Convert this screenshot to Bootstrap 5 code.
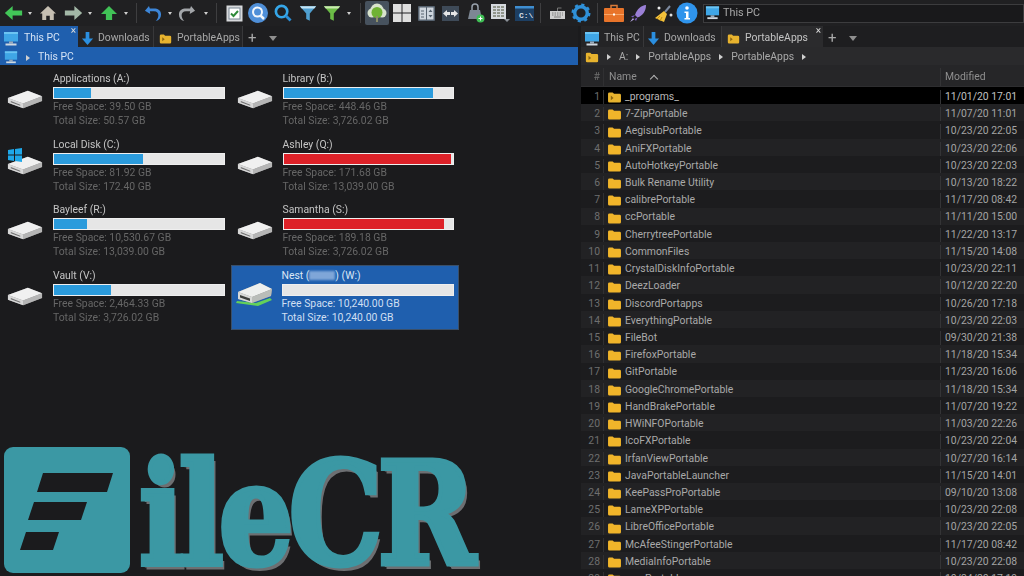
<!DOCTYPE html>
<html lang="en"><head><meta charset="utf-8"><title>XYplorer</title>
<link href="https://cdn.jsdelivr.net/npm/bootstrap@5.3.0/dist/css/bootstrap.min.css" rel="stylesheet">
<style>
html,body{height:100%;margin:0;overflow:hidden}
body{background:#1b1b1d;font:10.4px/1 Roboto,sans-serif;color:#bdbdbd;width:1024px;height:576px;position:relative}
.softlayer{filter:blur(.35px);height:576px}
svg{display:block;flex:none}
.topbar{height:26px;background:#202022;padding-left:1px}
.slot{width:24px;height:24px;display:flex;align-items:center;justify-content:center;flex:none}
.slot.on{background:#47525e;border-radius:2px}
.shift{margin-left:1px}
.shift2{margin-left:2px}
.pip{width:10px;display:flex;justify-content:center;flex:none}
.pip.tight,.vsep.tight{width:9px}
.pip i{display:block;width:0;height:0;border:2px solid transparent;border-top:3px solid #cfcfcf;border-bottom:0}
.vsep{width:10px;display:flex;justify-content:center;flex:none}
.vsep i{display:block;width:1px;height:20px;background:#3e3e40}
.addr{margin-left:4px;flex:1;height:19px;border:1px solid #3c3c3e;background:#19191b;padding-left:1px;gap:3px;font-size:10.8px;color:#a8a8a8}
.panes{height:550px}
.pane-l{width:578px;flex:none;background:#1b1b1d}
.pane-gap{width:3px;flex:none;background:#1b1b1d}
.pane-r{flex:1;background:#1f1f21;min-width:0}
.tabrow{height:21px;background:#1e1e20;color:#a9a9a9}
.tabx{height:21px;border-right:1px solid #38383a;padding:4px 0 0 3px;gap:4px;flex:none;position:relative;background:#242426;white-space:nowrap}
.tabx.folder{padding-left:5px;gap:5px}
.tabx.act-blue{background:#1f5fae;color:#d5e3f5;border:0;gap:5px}
.tabx.act-dark{background:#2b2b2d;color:#c4c4c4;border:0}
.tabx b{font-weight:400;position:absolute;right:2px;top:0;font-size:10px;color:#dcdcdc;line-height:9px}
.tw-63{width:63px}.tw-76{width:76px}.tw-78{width:78px}.tw-89{width:89px}.tw-101{width:101px}
.tabadd{font-size:15px;color:#a8a8a8;margin:3px 0 0 5px;width:13px;font-weight:400}
.tabmore{width:0;height:0;border:4px solid transparent;border-top:5px solid #8f8f8f;border-bottom:0;margin:4px 0 0 8px}
.crumbs{height:18px;gap:0}
.crumbs.blue{background:#1f5fae;color:#d3e2f5;padding-top:3px}
.crumbs.dark{background:#2a2a2c;color:#a9a9a9;padding-top:2px}
.tri{width:0;height:0;border:3px solid transparent;border-left:4px solid #d0d0d0;border-right:0;flex:none}
.drives{display:grid;grid-template-columns:229.5px 229.5px;grid-auto-rows:65.67px;padding:3px 0 0 1px}
.drv{padding:0 6px 0 52px;position:relative;color:#666}
.drv.sel{background:#1f5fae;border:1px solid #3a4f69;color:#d0dff2;margin:0 1px 1px 0;padding-left:50px;padding-right:4px}
.drv svg.dk{position:absolute;left:6px;top:22px}
.drv svg.dk.big{left:3px;top:16px}
.drv svg.win{position:absolute;left:7px;top:14px}
.drv-name{color:#c4c4c4;height:19px;line-height:21px;white-space:nowrap}
.sel .drv-name{color:#dbe6f5;height:18px;line-height:19px}
.blurname{display:inline-block;width:26px;height:9px;background:#7fa6d8;filter:blur(1.2px);vertical-align:-1px}
.meter{height:12px;background:#e6e6e6;border:1px solid #efefef;display:flex;margin-bottom:1px}
.meter span{display:block;height:100%}
.fill-b{background:#2b9bdc}
.fill-r{background:#dd2128}
.drv-l{height:14px;line-height:14px;white-space:nowrap}
.brand{position:absolute;left:4px;top:447px;height:126px;pointer-events:none;gap:7px}
.brand-t{font:700 136px/126px "DejaVu Serif",serif;color:#3b98a4;letter-spacing:-6px;text-shadow:2px 2px 0 #6d6f72,4px 4px 0 #6d6f72;-webkit-text-stroke:5px #3b98a4;transform-origin:0 85%;transform:scale(.87,1.05);white-space:nowrap;margin-top:6px;margin-left:2px}
.lhead{height:22px;background:#262628;color:#8f8f8f;border-bottom:1px solid #2e2e30;padding-top:3px}
.c-n{width:23px;flex:none;text-align:right;padding-right:3px;color:#6f6f6f;border-right:1px solid #303032;height:100%;display:flex;align-items:center;justify-content:flex-end}
.c-name{flex:1;display:flex;align-items:center;gap:3px;padding-left:3px;min-width:0;white-space:nowrap;color:#a9a9a9;height:100%}
.lhead .c-name{padding-left:5px}
.c-date{width:84px;flex:none;padding-left:4px;display:flex;align-items:center;border-left:1px solid #343436;height:100%;color:#a4a4a4;white-space:nowrap}
.lhead .c-name,.lhead .c-date{color:#8f8f8f}
.caret-up{width:6px;height:6px;border-left:1.5px solid #b5b5b5;border-top:1.5px solid #b5b5b5;transform:rotate(45deg);margin:3px 0 0 11px}
.rw{height:17.22px;background:#1c1c1e;padding-top:3px}
.rw:nth-child(even){background:#222224}
.rw.first{background:#000}
.rw.first .c-date{color:#c0c0c0}
.rw.first .c-name{color:#b8b8b8}
.listbody{overflow:hidden;height:489px}
</style></head><body>
<div class="softlayer">
<svg width="0" height="0" style="position:absolute">
<symbol id="pc" viewBox="0 0 16 14"><rect x="1" y="0" width="14" height="9.500" fill="#3fa6e6"/><rect x="1" y="0" width="14" height="2" fill="#6cc4f2"/><rect x="6" y="9.500" width="4" height="2" fill="#9ab"/><rect x="2.500" y="11.500" width="11" height="2" fill="#cfd8e0"/></symbol>
<symbol id="dn" viewBox="0 0 14 16"><path d="M5 1h4v7h4l-6 7-6-7h4z" fill="#2b8fe0"/></symbol>
<symbol id="fo" viewBox="0 0 16 13"><path d="M1 3a1.500 1.500 0 0 1 1.500-1.500h3.500l1.500 1.500h6A1.500 1.500 0 0 1 15 4.500v6.500a1.500 1.500 0 0 1-1.500 1.500h-11A1.500 1.500 0 0 1 1 11z" fill="#f1b52a"/></symbol>
<symbol id="fp" viewBox="0 0 16 13"><path d="M1 3a1.500 1.500 0 0 1 1.500-1.500h3.500l1.500 1.500h6A1.500 1.500 0 0 1 15 4.500v6.500a1.500 1.500 0 0 1-1.500 1.500h-11A1.500 1.500 0 0 1 1 11z" fill="#e7b32e"/><path d="M4 5l3 2.500-3 2.500z" fill="#8a6412"/></symbol>
<symbol id="hd" viewBox="0 0 38 24" preserveAspectRatio="none"><path d="M1 10 22 1l15 7v6L17 23 1 16z" fill="#8f8f8f"/><path d="M1 10 22 1l15 7-20 9z" fill="#f0f0f0"/><path d="M17 17l20-9v6L17 23z" fill="#b5b5b5"/><path d="M1 10l16 7v6L1 16z" fill="#d8d8d8"/><path d="M4 14l10 4.500V20L4 15.500z" fill="#6f6f6f"/></symbol>
<symbol id="hdn" viewBox="0 0 39 25"><path d="M1 21l22 3 14-6-2-2-14 5-19-2z" fill="#63d05a"/><path d="M3 10 25 1l12 6-1 7-19 7-14-4z" fill="#8f8f8f"/><path d="M3 10 25 1l12 6-20 8z" fill="#eef0ee"/><path d="M17 15 37 7l-1 7-19 7z" fill="#b9bdb9"/><path d="M3 10l14 5v6L3 17z" fill="#d7d9d7"/><path d="M5 13l10 3.500v2.500L5 15.500z" fill="#3c3f3c"/></symbol>
</svg>

<div class="topbar d-flex align-items-center">
<div class="slot"><svg width="19" height="16" viewBox="0 0 22 18"><path d="M1 9l9-8v5h11v6H10v5z" fill="#42c658"/></svg></div><div class="pip"><i></i></div>
<div class="slot shift"><svg width="18" height="16" viewBox="0 0 20 18"><path d="M10 1l9 8.500h-2.500V17H12v-5H8v5H3.500V9.500H1z" fill="#c6bfb2"/></svg></div>
<div class="slot shift"><svg width="19" height="16" viewBox="0 0 22 18"><path d="M21 9l-9-8v5H1v6h11v5z" fill="#a3b8a7"/></svg></div><div class="pip"><i></i></div>
<div class="slot shift2"><svg width="18" height="16" viewBox="0 0 20 18"><path d="M10 1l9 9h-5.500v7h-7v-7H1z" fill="#40c256"/></svg></div><div class="pip"><i></i></div>
<div class="vsep"><i></i></div>
<div class="slot"><svg width="18" height="17" viewBox="0 0 20 19"><path d="M5.500 1 1 6.500l6 3.500-.5-3h4.500c3.500 0 5 2 5 4.500 0 2.500-1 4.500-3 6.500 4-1 6-4 6-7.500C19 6 15.500 4 11 4H6.500z" fill="#3d86d8"/></svg></div><div class="pip tight"><i></i></div>
<div class="slot shift"><svg width="18" height="17" viewBox="0 0 20 19"><path d="M14.500 1 19 6.500 13 10l.5-3H9c-3.500 0-5 2-5 4.500 0 2.500 1 4.500 3 6.500-4-1-6-4-6-7.500C1 6 4.500 4 9 4h4.500z" fill="#a3a6aa"/></svg></div><div class="pip shift2"><i></i></div>
<div class="vsep"><i></i></div>
<div class="slot shift"><svg width="17" height="17" viewBox="0 0 17 17"><rect x=".5" y=".5" width="16" height="16" fill="#d7d9dc"/><rect x="3" y="3" width="11" height="11" fill="#fff" stroke="#7b8794"/><path d="M5 8.500l2.500 2.500L12 6" fill="none" stroke="#2f8a3a" stroke-width="2"/></svg></div>
<div class="slot"><svg width="20" height="20" viewBox="0 0 20 20"><circle cx="10" cy="10" r="10" fill="#4f8fd8"/><circle cx="9.500" cy="9" r="4.500" fill="none" stroke="#f2f6fb" stroke-width="2"/><path d="M12.500 12.500l3.500 3.500" stroke="#f2f6fb" stroke-width="2.500"/></svg></div>
<div class="slot shift"><svg width="18" height="18" viewBox="0 0 19 19"><circle cx="8" cy="8" r="6" fill="none" stroke="#35a6e8" stroke-width="2.800"/><path d="M12.500 12.500l5 5" stroke="#2a8fd8" stroke-width="3"/></svg></div>
<div class="slot shift"><svg width="18" height="17" viewBox="0 0 20 18"><path d="M1 1h18l-7 8v8l-4-2V9z" fill="#4f9fd0"/><path d="M1 1h18l-2 2.500H3z" fill="#c3e4f5"/></svg></div>
<div class="slot"><svg width="18" height="17" viewBox="0 0 20 18"><path d="M1 1h18l-7 8v8l-4-2V9z" fill="#6cbc46"/><path d="M1 1h18l-2 2.500H3z" fill="#c9eab0"/></svg></div><div class="pip"><i></i></div>
<div class="vsep shift"><i></i></div>
<div class="slot on"><svg width="20" height="20" viewBox="0 0 20 20"><circle cx="10" cy="7" r="6.500" fill="#d8e3cc"/><circle cx="5" cy="10" r="4.500" fill="#d8e3cc"/><circle cx="15" cy="10" r="4.500" fill="#d8e3cc"/><circle cx="10" cy="9.500" r="5.500" fill="#6fb234"/><rect x="9" y="13" width="2" height="6" fill="#8d8f6a"/></svg></div>
<div class="slot shift"><svg width="18" height="18" viewBox="0 0 19 19"><path d="M0 0h9v9H0zM10 0h9v9h-9zM0 10h9v9H0zM10 10h9v9h-9z" fill="#dedede"/></svg></div>
<div class="slot"><svg width="17" height="15" viewBox="0 0 17 15"><rect width="17" height="15" rx="1" fill="#56626f"/><rect x="1.500" y="1.500" width="6.500" height="12" fill="#cfd6de"/><rect x="9" y="1.500" width="6.500" height="12" fill="#cfd6de"/><path d="M3 5h3M3 8h3M3 11h3" stroke="#56626f"/><path d="M10.500 6l2-2.500 2 2.500zM10.500 9l2 2.500 2-2.500z" fill="#56626f"/></svg></div>
<div class="slot"><svg width="17" height="15" viewBox="0 0 17 15"><rect width="17" height="15" fill="#3e4a58"/><path d="M1 7.500l4-3.500v2h3v3H5v2zM16 7.500l-4-3.500v2H9v3h3v2z" fill="#e6e6e6"/></svg></div>
<div class="slot shift"><svg width="19" height="20" viewBox="0 0 19 20"><path d="M2 16 4 7h10l2 9z" fill="#7d8794"/><path d="M6 7V4a3 3 0 0 1 6 0v3" fill="none" stroke="#98a1ac" stroke-width="1.500"/><circle cx="14.500" cy="15.500" r="4" fill="#3fbf55"/><path d="M12.500 15.500h4M14.500 13.500v4" stroke="#fff"/></svg></div>
<div class="slot shift"><svg width="19" height="18" viewBox="0 0 19 18"><rect width="15" height="15" fill="#d5d9de"/><path d="M2 3h3M6 3h3M10 3h3M2 6h3M6 6h3M10 6h3M2 9h3M6 9h3M10 9h3M2 12h3M6 12h3M10 12h3" stroke="#7a7f70" stroke-width="1.500"/><path d="M13 15h6l-3 3z" fill="#8a9097"/></svg></div>
<div class="slot"><svg width="19" height="15" viewBox="0 0 19 15"><rect width="19" height="15" fill="#1d3f63"/><rect width="19" height="2.500" fill="#3f8ed0"/><text x="4" y="11.500" font-family="Liberation Mono, monospace" font-size="8" font-weight="700" fill="#d9dfe6">C:\</text></svg></div>
<div class="vsep tight"><i></i></div>
<div class="slot"><svg width="17" height="14" viewBox="0 0 17 14"><path d="M1 5h15v8H1z" fill="#cfcfcf"/><path d="M3 7h11M3 9h11" stroke="#7d7d7d" stroke-dasharray="1.500 1"/><path d="M5 11h7" stroke="#7d7d7d"/><path d="M8.500 5V2h4" fill="none" stroke="#777"/></svg></div>
<div class="slot"><svg width="20" height="20" viewBox="0 0 20 20"><circle cx="10" cy="10" r="6.300" fill="none" stroke="#2f90d8" stroke-width="3.400"/><circle cx="10" cy="10" r="8" fill="none" stroke="#2f90d8" stroke-width="3" stroke-dasharray="3 3.280"/></svg></div>
<div class="vsep tight"><i></i></div>
<div class="slot"><svg width="20" height="18" viewBox="0 0 20 18"><path d="M7 4V1.500h6V4" fill="none" stroke="#d97a38" stroke-width="1.500"/><rect y="4" width="20" height="14" rx="1" fill="#e8742a"/><rect y="10" width="20" height="1" fill="#f6a566"/><rect x="9" y="9.500" width="2" height="2" fill="#fff"/></svg></div>
<div class="slot"><svg width="18" height="19" viewBox="0 0 18 19"><path d="M17 1c-5 .5-9 4-11 10l2.500 2.500C14 11.500 17 7 17 1z" fill="#9a7fd6"/><path d="M6 11 2 12.500l2 1zM8.500 13.500 7 17l-1.500-2z" fill="#7a5bc0"/><path d="M4 14l-3 4 4-2.500z" fill="#b8a9e3"/></svg></div>
<div class="slot shift"><svg width="21" height="21" viewBox="0 0 21 21"><path d="M17 3 12 9" stroke="#7d8aa0" stroke-width="2"/><path d="M11 8l3 3-3 8-9-4z" fill="#f3c13a"/><path d="M4 16l3-3M7 18l2-4" stroke="#c08e14"/><circle cx="6" cy="5" r="1.500" fill="#eee"/><circle cx="18" cy="12" r="1.500" fill="#ddd"/></svg></div>
<div class="slot"><svg width="22" height="22" viewBox="0 0 22 22"><circle cx="11" cy="11" r="10.500" fill="#2f94ec"/><circle cx="11" cy="6" r="1.800" fill="#fff"/><path d="M8.500 9.500h4V16h1.500v1.500H8.500V16H10v-5H8.500z" fill="#fff"/></svg></div>
<div class="addr d-flex align-items-center"><svg width="15" height="14"><use href="#pc"/></svg><span>This PC</span></div>
</div>

<div class="panes d-flex">
<section class="pane-l">
<div class="tabrow d-flex align-items-center">
<div class="tabx act-blue tw-78 d-flex align-items-center"><svg width="16" height="14"><use href="#pc"/></svg><span>This PC</span><b>×</b></div>
<div class="tabx tw-76 d-flex align-items-center"><svg width="13" height="15"><use href="#dn"/></svg><span>Downloads</span></div>
<div class="tabx folder tw-89 d-flex align-items-center"><svg width="13" height="11"><use href="#fp"/></svg><span>PortableApps</span></div>
<div class="tabadd">+</div><div class="tabmore"></div>
</div>
<div class="crumbs blue d-flex align-items-center"><svg class="ms-1" width="14" height="13"><use href="#pc"/></svg><span class="tri ms-2"></span><span class="ms-2">This PC</span></div>
<div class="drives">
<div class="drv"><svg class="dk" width="36" height="19"><use href="#hd"/></svg><div class="drv-name">Applications (A:)</div><div class="meter"><span class="fill-b" style="width:22%"></span></div><div class="drv-l">Free Space: 39.50 GB</div><div class="drv-l">Total Size: 50.57 GB</div></div>
<div class="drv"><svg class="dk" width="36" height="19"><use href="#hd"/></svg><div class="drv-name">Library (B:)</div><div class="meter"><span class="fill-b" style="width:88%"></span></div><div class="drv-l">Free Space: 448.46 GB</div><div class="drv-l">Total Size: 3,726.02 GB</div></div>
<div class="drv"><svg class="dk" width="36" height="19"><use href="#hd"/></svg><svg class="win" width="14" height="14" viewBox="0 0 14 14"><path d="M0 2l6-1v5.500H0zM7 1l7-1v6.500H7zM0 7.500h6V13l-6-1zM7 7.500h7V14l-7-1z" fill="#1ea7e8"/></svg><div class="drv-name">Local Disk (C:)</div><div class="meter"><span class="fill-b" style="width:52.500%"></span></div><div class="drv-l">Free Space: 81.92 GB</div><div class="drv-l">Total Size: 172.40 GB</div></div>
<div class="drv"><svg class="dk" width="36" height="19"><use href="#hd"/></svg><div class="drv-name">Ashley (Q:)</div><div class="meter"><span class="fill-r" style="width:98.700%"></span></div><div class="drv-l">Free Space: 171.68 GB</div><div class="drv-l">Total Size: 13,039.00 GB</div></div>
<div class="drv"><svg class="dk" width="36" height="19"><use href="#hd"/></svg><div class="drv-name">Bayleef (R:)</div><div class="meter"><span class="fill-b" style="width:19.500%"></span></div><div class="drv-l">Free Space: 10,530.67 GB</div><div class="drv-l">Total Size: 13,039.00 GB</div></div>
<div class="drv"><svg class="dk" width="36" height="19"><use href="#hd"/></svg><div class="drv-name">Samantha (S:)</div><div class="meter"><span class="fill-r" style="width:94.500%"></span></div><div class="drv-l">Free Space: 189.18 GB</div><div class="drv-l">Total Size: 3,726.02 GB</div></div>
<div class="drv"><svg class="dk" width="36" height="19"><use href="#hd"/></svg><div class="drv-name">Vault (V:)</div><div class="meter"><span class="fill-b" style="width:33.500%"></span></div><div class="drv-l">Free Space: 2,464.33 GB</div><div class="drv-l">Total Size: 3,726.02 GB</div></div>
<div class="drv sel"><svg class="dk big" width="39" height="25"><use href="#hdn"/></svg><div class="drv-name">Nest (<span class="blurname"></span>) (W:)</div><div class="meter"></div><div class="drv-l">Free Space: 10,240.00 GB</div><div class="drv-l">Total Size: 10,240.00 GB</div></div>
</div>
</section>
<div class="pane-gap"></div>
<section class="pane-r d-flex flex-column">
<div class="tabrow d-flex align-items-center">
<div class="tabx tw-63 d-flex align-items-center"><svg width="16" height="14"><use href="#pc"/></svg><span>This PC</span></div>
<div class="tabx tw-78 d-flex align-items-center"><svg width="13" height="15"><use href="#dn"/></svg><span>Downloads</span></div>
<div class="tabx folder act-dark tw-101 d-flex align-items-center"><svg width="13" height="11"><use href="#fp"/></svg><span>PortableApps</span><b>×</b></div>
<div class="tabadd">+</div><div class="tabmore"></div>
</div>
<div class="crumbs dark d-flex align-items-center"><svg class="ms-1" width="14" height="12"><use href="#fp"/></svg><span class="tri ms-2"></span><span class="ms-2">A:</span><span class="tri ms-2"></span><span class="ms-2">PortableApps</span><span class="tri ms-2"></span><span class="ms-2">PortableApps</span><span class="tri ms-2"></span></div>
<div class="lhead d-flex align-items-center"><div class="c-n">#</div><div class="c-name">Name<span class="caret-up"></span></div><div class="c-date">Modified</div></div>
<div class="listbody">
<div class="rw first d-flex"><div class="c-n">1</div><div class="c-name"><svg width="15" height="12"><use href="#fp"/></svg>_programs_</div><div class="c-date">11/01/20 17:01</div></div>
<div class="rw d-flex"><div class="c-n">2</div><div class="c-name"><svg width="15" height="12"><use href="#fo"/></svg>7-ZipPortable</div><div class="c-date">11/07/20 11:01</div></div>
<div class="rw d-flex"><div class="c-n">3</div><div class="c-name"><svg width="15" height="12"><use href="#fo"/></svg>AegisubPortable</div><div class="c-date">10/23/20 22:05</div></div>
<div class="rw d-flex"><div class="c-n">4</div><div class="c-name"><svg width="15" height="12"><use href="#fo"/></svg>AniFXPortable</div><div class="c-date">10/23/20 22:06</div></div>
<div class="rw d-flex"><div class="c-n">5</div><div class="c-name"><svg width="15" height="12"><use href="#fo"/></svg>AutoHotkeyPortable</div><div class="c-date">10/23/20 22:03</div></div>
<div class="rw d-flex"><div class="c-n">6</div><div class="c-name"><svg width="15" height="12"><use href="#fo"/></svg>Bulk Rename Utility</div><div class="c-date">10/13/20 18:22</div></div>
<div class="rw d-flex"><div class="c-n">7</div><div class="c-name"><svg width="15" height="12"><use href="#fo"/></svg>calibrePortable</div><div class="c-date">11/17/20 08:42</div></div>
<div class="rw d-flex"><div class="c-n">8</div><div class="c-name"><svg width="15" height="12"><use href="#fo"/></svg>ccPortable</div><div class="c-date">11/11/20 15:00</div></div>
<div class="rw d-flex"><div class="c-n">9</div><div class="c-name"><svg width="15" height="12"><use href="#fo"/></svg>CherrytreePortable</div><div class="c-date">11/22/20 13:17</div></div>
<div class="rw d-flex"><div class="c-n">10</div><div class="c-name"><svg width="15" height="12"><use href="#fo"/></svg>CommonFiles</div><div class="c-date">11/15/20 14:08</div></div>
<div class="rw d-flex"><div class="c-n">11</div><div class="c-name"><svg width="15" height="12"><use href="#fo"/></svg>CrystalDiskInfoPortable</div><div class="c-date">10/23/20 22:11</div></div>
<div class="rw d-flex"><div class="c-n">12</div><div class="c-name"><svg width="15" height="12"><use href="#fo"/></svg>DeezLoader</div><div class="c-date">10/12/20 22:20</div></div>
<div class="rw d-flex"><div class="c-n">13</div><div class="c-name"><svg width="15" height="12"><use href="#fo"/></svg>DiscordPortapps</div><div class="c-date">10/26/20 17:18</div></div>
<div class="rw d-flex"><div class="c-n">14</div><div class="c-name"><svg width="15" height="12"><use href="#fo"/></svg>EverythingPortable</div><div class="c-date">10/23/20 22:03</div></div>
<div class="rw d-flex"><div class="c-n">15</div><div class="c-name"><svg width="15" height="12"><use href="#fo"/></svg>FileBot</div><div class="c-date">09/30/20 21:38</div></div>
<div class="rw d-flex"><div class="c-n">16</div><div class="c-name"><svg width="15" height="12"><use href="#fo"/></svg>FirefoxPortable</div><div class="c-date">11/18/20 15:34</div></div>
<div class="rw d-flex"><div class="c-n">17</div><div class="c-name"><svg width="15" height="12"><use href="#fo"/></svg>GitPortable</div><div class="c-date">11/23/20 16:06</div></div>
<div class="rw d-flex"><div class="c-n">18</div><div class="c-name"><svg width="15" height="12"><use href="#fo"/></svg>GoogleChromePortable</div><div class="c-date">11/18/20 15:34</div></div>
<div class="rw d-flex"><div class="c-n">19</div><div class="c-name"><svg width="15" height="12"><use href="#fo"/></svg>HandBrakePortable</div><div class="c-date">11/07/20 19:22</div></div>
<div class="rw d-flex"><div class="c-n">20</div><div class="c-name"><svg width="15" height="12"><use href="#fo"/></svg>HWiNFOPortable</div><div class="c-date">11/03/20 22:26</div></div>
<div class="rw d-flex"><div class="c-n">21</div><div class="c-name"><svg width="15" height="12"><use href="#fo"/></svg>IcoFXPortable</div><div class="c-date">10/23/20 22:04</div></div>
<div class="rw d-flex"><div class="c-n">22</div><div class="c-name"><svg width="15" height="12"><use href="#fo"/></svg>IrfanViewPortable</div><div class="c-date">10/27/20 16:14</div></div>
<div class="rw d-flex"><div class="c-n">23</div><div class="c-name"><svg width="15" height="12"><use href="#fo"/></svg>JavaPortableLauncher</div><div class="c-date">11/15/20 14:01</div></div>
<div class="rw d-flex"><div class="c-n">24</div><div class="c-name"><svg width="15" height="12"><use href="#fo"/></svg>KeePassProPortable</div><div class="c-date">09/10/20 13:08</div></div>
<div class="rw d-flex"><div class="c-n">25</div><div class="c-name"><svg width="15" height="12"><use href="#fo"/></svg>LameXPPortable</div><div class="c-date">10/23/20 22:08</div></div>
<div class="rw d-flex"><div class="c-n">26</div><div class="c-name"><svg width="15" height="12"><use href="#fo"/></svg>LibreOfficePortable</div><div class="c-date">10/23/20 22:05</div></div>
<div class="rw d-flex"><div class="c-n">27</div><div class="c-name"><svg width="15" height="12"><use href="#fo"/></svg>McAfeeStingerPortable</div><div class="c-date">11/17/20 08:42</div></div>
<div class="rw d-flex"><div class="c-n">28</div><div class="c-name"><svg width="15" height="12"><use href="#fo"/></svg>MediaInfoPortable</div><div class="c-date">10/23/20 22:08</div></div>
<div class="rw d-flex"><div class="c-n">29</div><div class="c-name"><svg width="15" height="12"><use href="#fo"/></svg>mpvPortable</div><div class="c-date">10/24/20 17:19</div></div>
</div>
</section>
</div>

<div class="brand d-flex">
<svg width="126" height="126" viewBox="0 0 126 126"><rect width="126" height="126" rx="9" fill="#3b98a4"/><path d="M39 26h70l-6 19H33zM30 55h53l-6 18H24zM22 85h33l-6 18H16z" fill="#1b1b1d"/></svg>
<div class="brand-t">ileCR</div>
</div>
</div>
</body></html>
